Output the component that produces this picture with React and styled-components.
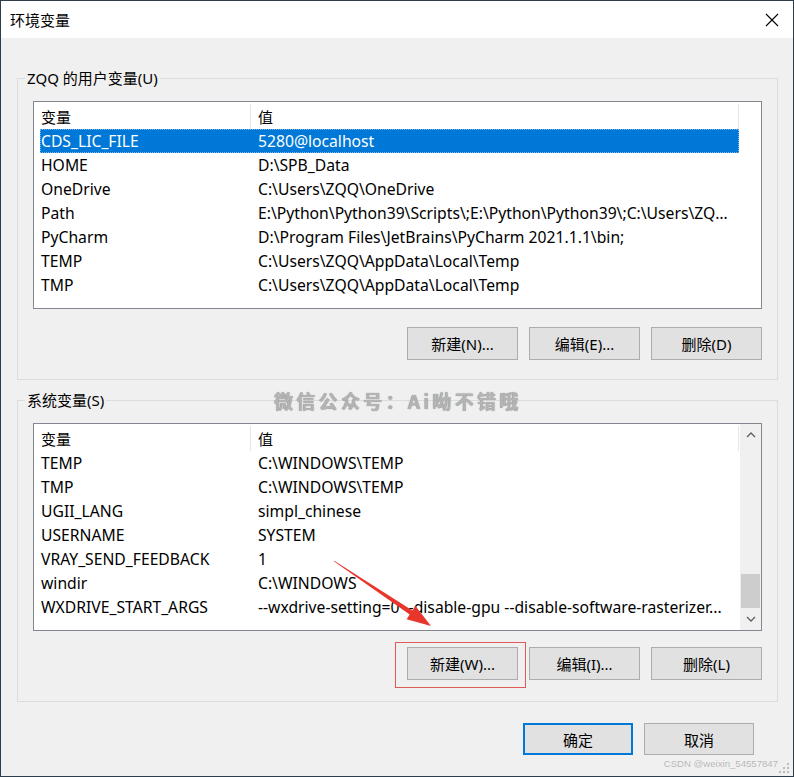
import React from "react";
import styled, { createGlobalStyle } from "styled-components";

const GlobalStyle = createGlobalStyle`
  html, body { margin: 0; padding: 0; background: #f0f0f0; }
  * { box-sizing: border-box; }
  body { font-family: "Noto Sans", "Noto Sans CJK SC", sans-serif; font-size: 15px; color: #000; }
`;

const FONT = `"Noto Sans", "Noto Sans CJK SC", sans-serif`;

const Window = styled.div`
  position: relative;
  width: 794px;
  height: 777px;
  border: 1px solid #2e3d4c;
  background: #f0f0f0;
  display: flex;
  flex-direction: column;
  overflow: hidden;
  font-family: ${FONT};
`;

const TitleBar = styled.div`
  height: 37px;
  flex: none;
  background: #fff;
  display: flex;
  align-items: center;
  justify-content: space-between;
  padding: 0 14px 0 9px;
  font-size: 15px;
`;

const TitleText = styled.span`
  line-height: 20px;
  margin-top: 1px;
`;

const CloseBtn = styled.span`
  display: flex;
  width: 14px;
  height: 14px;
  margin-top: 1px;
`;

const Body = styled.div`
  flex: 1;
  display: flex;
  flex-direction: column;
  padding: 30px 15px 0 16px;
`;

const Group = styled.fieldset`
  margin: ${(p) => p.$mt || 0}px 0 0 0;
  padding: 0;
  border: 1px solid #dcdcdc;
  min-width: 0;
`;

const Legend = styled.legend`
  margin-left: 7px;
  padding: 0 2px;
  line-height: 20px;
  font-size: 15px;
`;

const GroupInner = styled.div`
  padding: 13px 15px ${(p) => p.$pb}px 15px;
  display: flex;
  flex-direction: column;
`;

const ListView = styled.div`
  height: 208px;
  border: 1px solid #828790;
  background: #fff;
  display: flex;
`;

const ListContent = styled.div`
  flex: 1;
  display: flex;
  flex-direction: column;
  align-items: flex-start;
  overflow: hidden;
`;

const Header = styled.div`
  height: 27px;
  width: 699px;
  display: grid;
  grid-template-columns: 211px 488px;
  margin-left: 6px;
`;

const HeadCell = styled.div`
  margin-top: 2px;
  height: 25px;
  border-right: 1px solid #e5e5e5;
  display: flex;
  align-items: center;
  padding-left: ${(p) => p.$pl}px;
  padding-bottom: 1px;
`;

const Row = styled.div`
  height: 24px;
  width: 699px;
  flex: none;
  display: grid;
  grid-template-columns: 211px 488px;
  margin-left: 6px;
  align-items: center;
  background: ${(p) => (p.$selected ? "#0078d7" : "transparent")};
  color: ${(p) => (p.$selected ? "#fff" : "#000")};
  outline: ${(p) => (p.$selected ? "1px dotted #7fb4e6" : "none")};
  outline-offset: -1px;
`;

const Cell = styled.div`
  padding-left: ${(p) => p.$pl}px;
  white-space: nowrap;
  overflow: hidden;
  text-overflow: ellipsis;
  line-height: 24px;
  font-size: 15.7px;
`;

const ScrollBar = styled.div`
  width: 21px;
  flex: none;
  background: #f0f0f0;
  display: flex;
  flex-direction: column;
  padding: 0 1px;
  margin-left: 1px;
`;

const ScrollArrow = styled.div`
  height: 22px;
  display: flex;
  align-items: center;
  justify-content: center;
`;

const ScrollTrack = styled.div`
  flex: 1;
  display: flex;
  flex-direction: column;
  justify-content: flex-end;
`;

const Thumb = styled.div`
  height: 34px;
  background: #cdcdcd;
`;

const ButtonRow = styled.div`
  display: flex;
  justify-content: flex-end;
  gap: 11px;
  margin-top: ${(p) => p.$mt}px;
`;

const Button = styled.button`
  width: ${(p) => p.$w || 111}px;
  height: ${(p) => p.$h || 33}px;
  background: #e1e1e1;
  border: ${(p) => (p.$default ? "2px solid #0078d7" : "1px solid #adadad")};
  font-family: ${FONT};
  font-size: 15px;
  color: #000;
  padding: 0;
  display: flex;
  align-items: center;
  justify-content: center;
`;

const Footer = styled.div`
  display: flex;
  justify-content: flex-end;
  gap: 11px;
  padding: 21px 24px 0 0;
`;

const Watermark = styled.div`
  position: absolute;
  left: 273px;
  top: 386px;
  font-family: "Noto Sans CJK SC", sans-serif;
  font-size: 19px;
  font-weight: 700;
  letter-spacing: 3.3px;
  color: #b4b4b4;
  text-shadow: 0 0 1px #777;
  white-space: nowrap;
`;

const CsdnMark = styled.div`
  position: absolute;
  right: 15px;
  bottom: 7px;
  font-family: "Liberation Sans", sans-serif;
  font-size: 9.6px;
  color: #b4b4b4;
  text-shadow: 0 0 1px #fff;
  white-space: nowrap;
`;

const Grip = styled.svg`
  position: absolute;
  right: 3px;
  bottom: 2px;
`;

const Highlight = styled.div`
  position: absolute;
  left: 394px;
  top: 641px;
  width: 131px;
  height: 46px;
  border: 1px solid #e15a5a;
  pointer-events: none;
`;

const ArrowSvg = styled.svg`
  position: absolute;
  left: 0;
  top: 0;
  pointer-events: none;
`;

const userVars = [
  ["CDS_LIC_FILE", "5280@localhost"],
  ["HOME", "D:\\SPB_Data"],
  ["OneDrive", "C:\\Users\\ZQQ\\OneDrive"],
  ["Path", "E:\\Python\\Python39\\Scripts\\;E:\\Python\\Python39\\;C:\\Users\\ZQQ..."],
  ["PyCharm", "D:\\Program Files\\JetBrains\\PyCharm 2021.1.1\\bin;"],
  ["TEMP", "C:\\Users\\ZQQ\\AppData\\Local\\Temp"],
  ["TMP", "C:\\Users\\ZQQ\\AppData\\Local\\Temp"],
];

const sysVars = [
  ["TEMP", "C:\\WINDOWS\\TEMP"],
  ["TMP", "C:\\WINDOWS\\TEMP"],
  ["UGII_LANG", "simpl_chinese"],
  ["USERNAME", "SYSTEM"],
  ["VRAY_SEND_FEEDBACK", "1"],
  ["windir", "C:\\WINDOWS"],
  ["WXDRIVE_START_ARGS", "--wxdrive-setting=0 --disable-gpu --disable-software-rasterizer..."],
];

function Chevron({ up }) {
  return (
    <svg width="10" height="6" viewBox="0 0 10 6">
      <polyline
        points={up ? "1,5 5,1 9,5" : "1,1 5,5 9,1"}
        fill="none"
        stroke="#606060"
        strokeWidth="1.3"
      />
    </svg>
  );
}

function List({ rows, selected, scroll }) {
  return (
    <ListView>
      <ListContent>
        <Header>
          <HeadCell $pl={1}>变量</HeadCell>
          <HeadCell $pl={7}>值</HeadCell>
        </Header>
        {rows.map(([k, v], i) => (
          <Row key={k + i} $selected={i === selected}>
            <Cell $pl={1}>{k}</Cell>
            <Cell $pl={7}>{v}</Cell>
          </Row>
        ))}
      </ListContent>
      {scroll && (
        <ScrollBar>
          <ScrollArrow>
            <Chevron up />
          </ScrollArrow>
          <ScrollTrack>
            <Thumb />
          </ScrollTrack>
          <ScrollArrow>
            <Chevron />
          </ScrollArrow>
        </ScrollBar>
      )}
    </ListView>
  );
}

export default function App() {
  const sx = 333, sy = 560, tx = 430, ty = 625;
  const dx = tx - sx, dy = ty - sy;
  const len = Math.hypot(dx, dy);
  const ux = dx / len, uy = dy / len;
  const px = -uy, py = ux;
  const headLen = 24, headW = 8, shaftW = 2.4;
  const bx = tx - ux * headLen, by = ty - uy * headLen;
  const pts = [
    [sx + px * 0.4, sy + py * 0.4],
    [bx + px * shaftW, by + py * shaftW],
    [bx + px * headW, by + py * headW],
    [tx, ty],
    [bx - px * headW, by - py * headW],
    [bx - px * shaftW, by - py * shaftW],
    [sx - px * 0.4, sy - py * 0.4],
  ]
    .map((p) => p.map((n) => n.toFixed(1)).join(","))
    .join(" ");

  return (
    <>
      <GlobalStyle />
      <Window>
        <TitleBar>
          <TitleText>环境变量</TitleText>
          <CloseBtn>
            <svg width="14" height="14" viewBox="0 0 14 14">
              <path d="M1 1 L13 13 M13 1 L1 13" stroke="#000" strokeWidth="1.1" />
            </svg>
          </CloseBtn>
        </TitleBar>
        <Body>
          <Group>
            <Legend>ZQQ 的用户变量(U)</Legend>
            <GroupInner $pb={19}>
              <List rows={userVars} selected={0} />
              <ButtonRow $mt={18}>
                <Button>新建(N)...</Button>
                <Button>编辑(E)...</Button>
                <Button>删除(D)</Button>
              </ButtonRow>
            </GroupInner>
          </Group>
          <Group $mt={10}>
            <Legend>系统变量(S)</Legend>
            <GroupInner $pb={21}>
              <List rows={sysVars} scroll />
              <ButtonRow $mt={16}>
                <Button>新建(W)...</Button>
                <Button>编辑(I)...</Button>
                <Button>删除(L)</Button>
              </ButtonRow>
            </GroupInner>
          </Group>
          <Footer>
            <Button $default $w={110} $h={32}>确定</Button>
            <Button $w={110} $h={32}>取消</Button>
          </Footer>
        </Body>

        <Watermark>微信公众号：Ai呦不错哦</Watermark>
        <Highlight />
        <ArrowSvg width="794" height="777" viewBox="0 0 794 777">
          <polygon points={pts} fill="#e8362d" />
        </ArrowSvg>
        <CsdnMark>CSDN @weixin_54557847</CsdnMark>
        <Grip width="12" height="12" viewBox="0 0 12 12">
          {[
            [9, 1], [9, 5], [5, 5], [9, 9], [5, 9], [1, 9],
          ].map(([x, y]) => (
            <rect key={x + "-" + y} x={x} y={y} width="2" height="2" fill="#bcbcbc" />
          ))}
        </Grip>
      </Window>
    </>
  );
}
